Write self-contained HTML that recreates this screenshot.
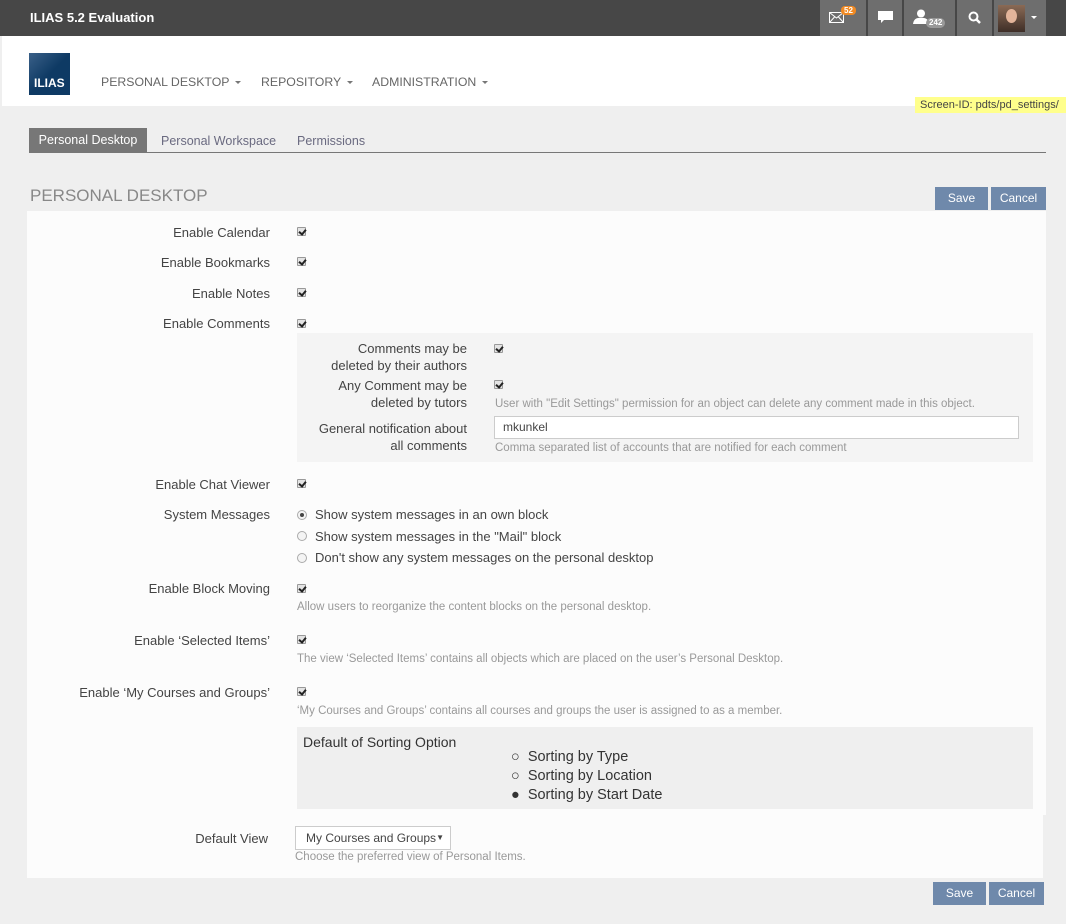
<!DOCTYPE html>
<html><head><meta charset="utf-8"><style>
*{margin:0;padding:0;box-sizing:border-box}
body{width:1066px;height:924px;background:#efefef;font-family:"Liberation Sans",sans-serif;font-size:13px;color:#444;position:relative;overflow:hidden}
.a{position:absolute;white-space:nowrap}
.lbl{position:absolute;right:796px;text-align:right;color:#444;line-height:17px}
.cb{position:absolute;width:9px;height:9px;border:1px solid #999;background:#e4e4e4;border-radius:1px}
.cb:after{content:"";position:absolute;left:2px;top:0px;width:3px;height:5px;border:solid #222;border-width:0 2px 2px 0;transform:rotate(40deg)}
.rd{position:absolute;width:10px;height:10px;border:1px solid #aaa;border-radius:50%;background:#f4f4f4}
.help{position:absolute;color:#999;font-size:11.5px;white-space:nowrap}
.btn{position:absolute;background:#6f89ab;color:#fff;font-size:12px;text-align:center;line-height:23px;height:23px}
.ib{position:absolute;top:0;height:36px;background:#6e6e6e}
.nav{position:absolute;top:75px;color:#666;font-size:12.3px;white-space:nowrap}
.car{display:inline-block;margin-left:6px;vertical-align:middle;border:3px solid transparent;border-top:3px solid #777;border-bottom:0}
</style></head><body>
<div class="a" style="left:0;top:0;width:1066px;height:36px;background:#474747"></div>
<div class="a" style="left:30px;top:10px;color:#fff;font-weight:bold;font-size:13px">ILIAS 5.2 Evaluation</div>
<div class="ib" style="left:820px;width:46px"></div>
<div class="ib" style="left:868px;width:34px"></div>
<div class="ib" style="left:904px;width:51px"></div>
<div class="ib" style="left:957px;width:35px"></div>
<div class="ib" style="left:994px;width:52px"></div>
<svg class="a" style="left:829px;top:12px" width="15" height="11"><rect x="0.5" y="0.5" width="14" height="10" fill="none" stroke="#fff"/><path d="M0.5 0.5L7.5 6L14.5 0.5M0.5 10.5L5.5 5M14.5 10.5L9.5 5" fill="none" stroke="#fff"/></svg>
<div class="a" style="left:841px;top:6px;background:#f08a24;color:#fff;font-size:8px;font-weight:bold;padding:0 3px;border-radius:4px;line-height:9px">52</div>
<svg class="a" style="left:878px;top:11px" width="15" height="13"><path d="M0 0H15V9H6L3 12V9H0Z" fill="#fff"/></svg>
<svg class="a" style="left:913px;top:9px" width="16" height="15"><circle cx="8" cy="4.5" r="4" fill="#fff"/><path d="M0 15Q1 8 8 9Q15 8 16 15Z" fill="#fff"/></svg>
<div class="a" style="left:926px;top:18px;background:#999;color:#fff;font-size:8px;font-weight:bold;padding:0 3px;border-radius:5px;line-height:10px">242</div>
<svg class="a" style="left:968px;top:11px" width="13" height="13"><circle cx="5.5" cy="5.5" r="4" fill="none" stroke="#fff" stroke-width="2"/><path d="M8.5 8.5L12 12" stroke="#fff" stroke-width="2.5"/></svg>
<div class="a" style="left:998px;top:5px;width:27px;height:27px;background:linear-gradient(#8a6a55,#3e2e27);overflow:hidden"><div style="position:absolute;left:8px;top:4px;width:11px;height:14px;border-radius:50%;background:#e3b49a"></div></div>
<div class="a" style="left:1031px;top:16px;border:3px solid transparent;border-top:3px solid #fff"></div>
<div class="a" style="left:2px;top:36px;width:1064px;height:70px;background:#fff"></div>
<div class="a" style="left:29px;top:53px;width:41px;height:42px;background:linear-gradient(135deg,#3a6088,#0e3a64 50%)"></div>
<div class="a" style="left:34px;top:76px;color:#fff;font-weight:bold;font-size:12px">ILIAS</div>
<div class="nav" style="left:101px">PERSONAL DESKTOP<span class="car"></span></div>
<div class="nav" style="left:261px">REPOSITORY<span class="car"></span></div>
<div class="nav" style="left:372px">ADMINISTRATION<span class="car"></span></div>
<div class="a" style="left:915px;top:97px;width:151px;height:16px;background:#ffff8c;color:#444;font-size:11px;line-height:16px;padding-left:5px;overflow:hidden">Screen-ID: pdts/pd_settings/</div>
<div class="a" style="left:29px;top:128px;width:118px;height:24px;background:#777;color:#fff;line-height:25px;text-align:center;font-size:12.5px">Personal Desktop</div>
<div class="a" style="left:161px;top:134px;color:#6a6a80;font-size:12.5px">Personal Workspace</div>
<div class="a" style="left:297px;top:134px;color:#6a6a80;font-size:12.5px">Permissions</div>
<div class="a" style="left:29px;top:152px;width:1017px;height:1px;background:#777"></div>
<div class="a" style="left:30px;top:186px;color:#888;font-size:17px">PERSONAL DESKTOP</div>
<div class="btn" style="left:935px;top:187px;width:53px">Save</div>
<div class="btn" style="left:991px;top:187px;width:55px">Cancel</div>
<div class="a" style="left:27px;top:211px;width:1019px;height:604px;background:#fcfcfc"></div>
<div class="lbl" style="top:224px">Enable Calendar</div><div class="cb" style="left:297px;top:227px"></div>
<div class="lbl" style="top:254px">Enable Bookmarks</div><div class="cb" style="left:297px;top:257px"></div>
<div class="lbl" style="top:285px">Enable Notes</div><div class="cb" style="left:297px;top:288px"></div>
<div class="lbl" style="top:315px">Enable Comments</div><div class="cb" style="left:297px;top:319px"></div>
<div class="a" style="left:297px;top:333px;width:736px;height:129px;background:#f4f4f4"></div>
<div class="lbl" style="top:340px;right:599px">Comments may be<br>deleted by their authors</div><div class="cb" style="left:494px;top:344px"></div>
<div class="lbl" style="top:377px;right:599px">Any Comment may be<br>deleted by tutors</div><div class="cb" style="left:494px;top:380px"></div>
<div class="help" style="left:495px;top:398px">User with "Edit Settings" permission for an object can delete any comment made in this object.</div>
<div class="lbl" style="top:420px;right:599px">General notification about<br>all comments</div>
<div class="a" style="left:494px;top:416px;width:525px;height:23px;background:#fff;border:1px solid #ccc;font-size:12px;line-height:21px;padding-left:8px;color:#444">mkunkel</div>
<div class="help" style="left:495px;top:442px">Comma separated list of accounts that are notified for each comment</div>
<div class="lbl" style="top:476px">Enable Chat Viewer</div><div class="cb" style="left:297px;top:479px"></div>
<div class="lbl" style="top:506px">System Messages</div>
<div class="rd" style="left:297px;top:510px"><div style="position:absolute;left:2px;top:2px;width:4px;height:4px;border-radius:50%;background:#444"></div></div>
<div class="a" style="left:315px;top:506px;line-height:17px">Show system messages in an own block</div>
<div class="rd" style="left:297px;top:531px"></div>
<div class="a" style="left:315px;top:528px;line-height:17px">Show system messages in the "Mail" block</div>
<div class="rd" style="left:297px;top:553px"></div>
<div class="a" style="left:315px;top:549px;line-height:17px">Don't show any system messages on the personal desktop</div>
<div class="lbl" style="top:580px">Enable Block Moving</div><div class="cb" style="left:297px;top:584px"></div>
<div class="help" style="left:297px;top:601px">Allow users to reorganize the content blocks on the personal desktop.</div>
<div class="lbl" style="top:632px">Enable ‘Selected Items’</div><div class="cb" style="left:297px;top:635px"></div>
<div class="help" style="left:297px;top:653px">The view ‘Selected Items’ contains all objects which are placed on the user’s Personal Desktop.</div>
<div class="lbl" style="top:684px">Enable ‘My Courses and Groups’</div><div class="cb" style="left:297px;top:687px"></div>
<div class="help" style="left:297px;top:705px">‘My Courses and Groups’ contains all courses and groups the user is assigned to as a member.</div>
<div class="a" style="left:297px;top:727px;width:736px;height:82px;background:#efefef"></div>
<div class="a" style="left:303px;top:734px;font-size:14px;color:#333">Default of Sorting Option</div>
<div class="a" style="left:511px;top:748px;font-size:14.5px;color:#333;line-height:19px">○&nbsp; Sorting by Type<br>○&nbsp; Sorting by Location<br>●&nbsp; Sorting by Start Date</div>
<div class="a" style="left:27px;top:815px;width:1016px;height:63px;background:#fcfcfc"></div>
<div class="lbl" style="top:830px;right:798px">Default View</div>
<div class="a" style="left:295px;top:826px;width:156px;height:24px;background:#fff;border:1px solid #ccc;font-size:12px;line-height:22px;padding-left:10px;color:#444">My Courses and Groups<span style="position:absolute;right:6px;font-size:8px">▼</span></div>
<div class="help" style="left:295px;top:851px">Choose the preferred view of Personal Items.</div>
<div class="btn" style="left:933px;top:882px;width:53px">Save</div>
<div class="btn" style="left:989px;top:882px;width:55px">Cancel</div>
</body></html>
